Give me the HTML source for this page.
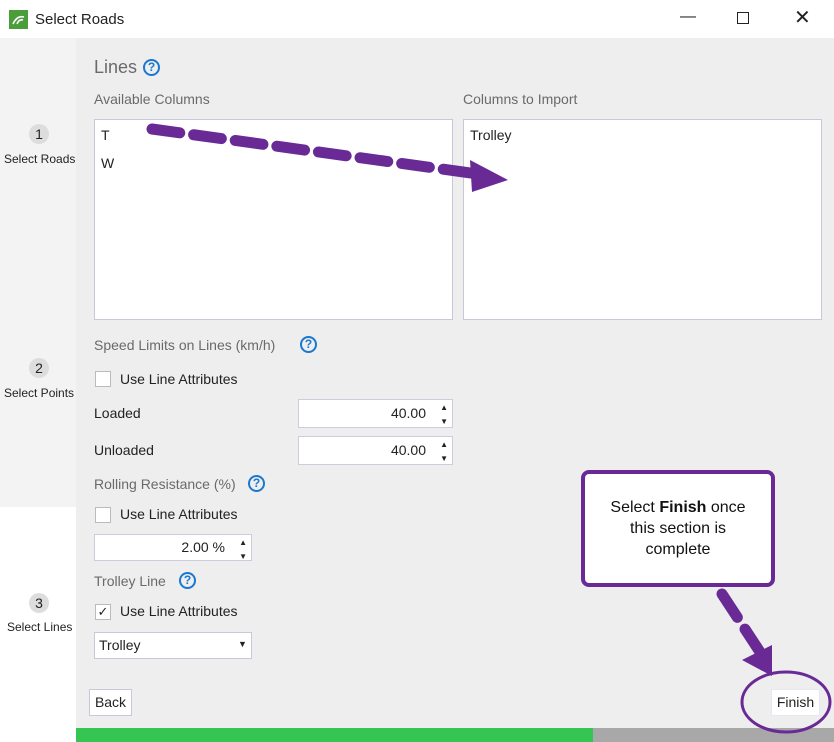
<!DOCTYPE html>
<html><head><meta charset="utf-8"><style>
*{margin:0;padding:0;box-sizing:border-box}
body{width:834px;height:742px;position:relative;overflow:hidden;font-family:"Segoe UI","Liberation Sans",sans-serif;font-size:14px;color:#222;background:#fff}
.a{position:absolute}
.q{position:absolute;width:17px;height:17px;border:2px solid #1a78d0;border-radius:50%;color:#1a78d0;font-weight:bold;font-size:12px;line-height:13px;text-align:center}
.lbl{color:#6a6a6a}
.box{background:#fff;border:1px solid #c8c8d8}
.cb{position:absolute;width:16px;height:16px;border:1px solid #bbb;background:#fff}
.spin{position:absolute;background:#fff;border:1px solid #ccccdc;text-align:right;font-size:14px;line-height:34px;padding-right:26px}
.spin:after{content:"▲\A▼";white-space:pre;position:absolute;right:4px;top:1px;font-size:8px;line-height:14px;color:#222}
</style></head><body>
<div class="a" style="left:0;top:0;width:834px;height:38px;background:#fff"></div>
<div class="a" style="left:9px;top:10px;width:19px;height:19px;background:#4a9e3a"></div>
<svg class="a" style="left:9px;top:10px" width="19" height="19"><path d="M4 14 Q8 5 15 7 M8 14 Q10 9 14 10" stroke="#fff" stroke-width="1.6" fill="none"/></svg>
<div class="a" style="left:35px;top:11px;font-size:15px">Select Roads</div>
<div class="a" style="left:680px;top:8px;font-size:16px">—</div>
<div class="a" style="left:737px;top:12px;width:12px;height:12px;border:1px solid #222"></div>
<div class="a" style="left:794px;top:5px;font-size:20px;font-weight:300">✕</div>
<div class="a" style="left:0;top:38px;width:76px;height:469px;background:#f3f3f3"></div>
<div class="a" style="left:0;top:507px;width:76px;height:235px;background:#fff"></div>
<div class="a" style="left:76px;top:38px;width:758px;height:690px;background:#eeeeee"></div>
<div class="a" style="left:29px;top:124px;width:20px;height:20px;border-radius:50%;background:#ddd;text-align:center;line-height:20px">1</div>
<div class="a" style="left:4px;top:152px;font-size:12px">Select Roads</div>
<div class="a" style="left:29px;top:358px;width:20px;height:20px;border-radius:50%;background:#ddd;text-align:center;line-height:20px">2</div>
<div class="a" style="left:4px;top:386px;font-size:12px">Select Points</div>
<div class="a" style="left:29px;top:593px;width:20px;height:20px;border-radius:50%;background:#ddd;text-align:center;line-height:20px">3</div>
<div class="a" style="left:7px;top:620px;font-size:12px">Select Lines</div>

<div class="a lbl" style="left:94px;top:57px;font-size:18px">Lines</div><div class="q" style="left:143px;top:59px">?</div>
<div class="a lbl" style="left:94px;top:91px">Available Columns</div>
<div class="a lbl" style="left:463px;top:91px">Columns to Import</div>
<div class="a box" style="left:94px;top:119px;width:359px;height:201px"></div>
<div class="a box" style="left:463px;top:119px;width:359px;height:201px"></div>
<div class="a" style="left:101px;top:127px">T</div>
<div class="a" style="left:101px;top:155px">W</div>
<div class="a" style="left:470px;top:127px">Trolley</div>

<div class="a lbl" style="left:94px;top:337px">Speed Limits on Lines (km/h)</div><div class="q" style="left:300px;top:336px">?</div>
<div class="cb" style="left:95px;top:371px"></div><div class="a" style="left:120px;top:371px">Use Line Attributes</div>
<div class="a" style="left:94px;top:405px">Loaded</div>
<div class="spin" style="left:298px;top:399px;width:155px;height:29px;line-height:27px">40.00</div>
<div class="a" style="left:94px;top:442px">Unloaded</div>
<div class="spin" style="left:298px;top:436px;width:155px;height:29px;line-height:27px">40.00</div>
<div class="a lbl" style="left:94px;top:476px">Rolling Resistance (%)</div><div class="q" style="left:248px;top:475px">?</div>
<div class="cb" style="left:95px;top:507px"></div><div class="a" style="left:120px;top:506px">Use Line Attributes</div>
<div class="spin" style="left:94px;top:534px;width:158px;height:27px;line-height:25px">2.00 %</div>
<div class="a lbl" style="left:94px;top:573px">Trolley Line</div><div class="q" style="left:179px;top:572px">?</div>
<div class="cb" style="left:95px;top:604px;font-size:13px;line-height:13px;text-align:center">✓</div><div class="a" style="left:120px;top:603px">Use Line Attributes</div>
<div class="a box" style="left:94px;top:632px;width:158px;height:27px"></div>
<div class="a" style="left:99px;top:637px">Trolley</div>
<div class="a" style="left:238px;top:639px;font-size:9px">▼</div>
<div class="a box" style="left:89px;top:689px;width:43px;height:27px;text-align:center;line-height:25px">Back</div>
<div class="a box" style="left:771px;top:689px;width:49px;height:27px;text-align:center;line-height:25px;border-color:#e4e8f0">Finish</div>
<div class="a" style="left:76px;top:728px;width:517px;height:14px;background:#34c552"></div>
<div class="a" style="left:593px;top:728px;width:241px;height:14px;background:#a8a8a8"></div>

<svg class="a" style="left:0;top:0" width="834" height="742">
<g stroke="#6a2a96" stroke-width="11" stroke-dasharray="28,14" stroke-linecap="round" fill="none">
<line x1="152" y1="129" x2="478" y2="174"/>
<line x1="722" y1="594" x2="760" y2="652"/>
</g>
<polygon points="470,160 508,180 472,192" fill="#6a2a96"/>
<polygon points="742,660 772,645 772,676" fill="#6a2a96"/>
<ellipse cx="786" cy="702" rx="44" ry="30" fill="none" stroke="#6a2a96" stroke-width="3"/>
<rect x="583" y="472" width="190" height="113" rx="6" fill="#fff" stroke="#6a2a96" stroke-width="4"/>
</svg>
<div class="a" style="left:598px;top:497px;width:160px;text-align:center;font-family:Arial,'Liberation Sans',sans-serif;font-size:16px;line-height:21px;color:#111">Select <b>Finish</b> once this section is complete</div>
</body></html>
